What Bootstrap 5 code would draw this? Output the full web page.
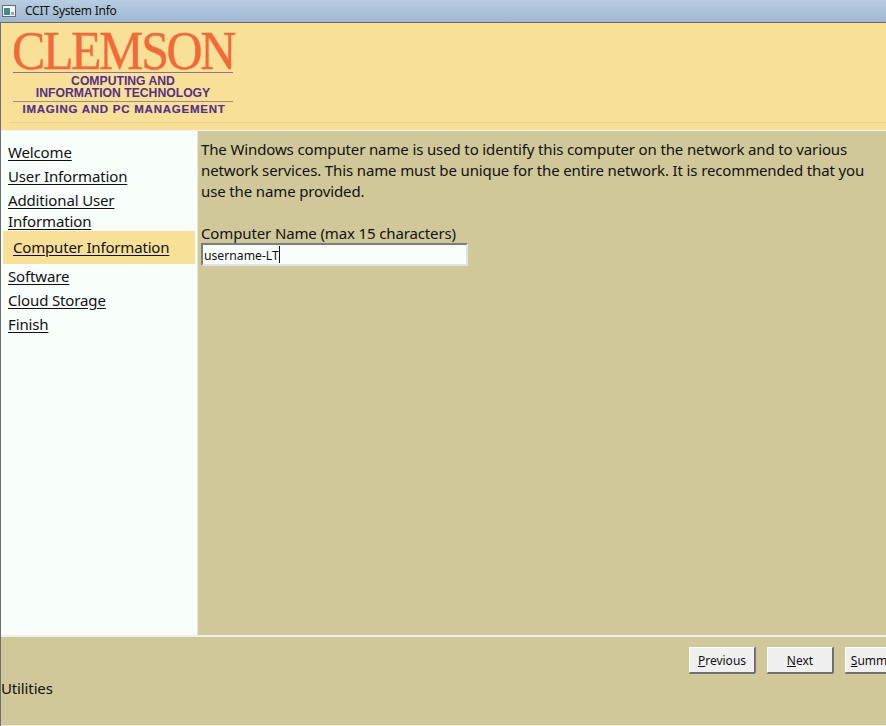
<!DOCTYPE html>
<html lang="en"><head><meta charset="utf-8"><title>CCIT System Info</title>
<link rel="stylesheet" href="https://cdn.jsdelivr.net/npm/bootstrap@5.3.0/dist/css/bootstrap.min.css">
<style>
html,body{height:726px;overflow:hidden}
body{font-family:"Noto Sans","Open Sans",sans-serif;font-size:15px;letter-spacing:-.13px;color:#111;background:#f0f0f0}
.win-title{height:22px;background:linear-gradient(#b9cde2,#9db6d1);font-size:12px;letter-spacing:-.25px;color:#111;padding-left:2px;gap:9px}
.win-body{height:704px;border-left:1px solid #6e6e6e;border-top:1px solid #6b6b6b}
.brand-bar{height:107px;background:#f8e197;padding:10px 0 0 11px;flex:none}
.brand-rule{height:1px;background:#e6d28e;margin:6px 0 0 -2px}
.word{font-family:"Liberation Serif",serif;font-size:54px;line-height:37px;height:37px;margin-bottom:2px;color:#f4683a;letter-spacing:-2.6px;transform:scaleX(.925);transform-origin:left center;white-space:nowrap;-webkit-text-stroke:.4px #f4683a}
.org{width:220px;margin-left:1px;color:#55308a;font-family:"Liberation Sans",sans-serif;font-weight:700;text-align:center;line-height:12px;font-size:12.2px;letter-spacing:0;border-top:1px solid #8c6f9c;border-bottom:1px solid #a08c80;padding:2px 0}
.org2{width:224px;color:#55308a;font-family:"Liberation Sans",sans-serif;font-weight:700;text-align:center;font-size:11.5px;letter-spacing:.75px;line-height:14px;white-space:nowrap;-webkit-text-stroke:.2px #55308a}
.mid{height:504px;margin-top:1px;background:#fff;flex:none}
.side{width:197px;background:#f8fffb;padding-top:11px;flex:none;border-right:1px solid #e6e4d2}
.side-link{display:block;padding:0 7px;line-height:21px;margin-bottom:3px;color:#111;text-decoration:underline;text-underline-offset:2px;letter-spacing:-.14px}
.side-link:hover{color:#111}
.side-active{background:#f8e197;margin:-4px 2px 2px;padding:6px 10px;width:192px;letter-spacing:-.18px}
.pane{background:#d0c898;padding:8px 3px;flex:1}
.pane p{line-height:21px;margin:0 0 21px;width:672px}
.fld-label{line-height:21px;display:block;margin:0}
.fld-wrap{width:267px;height:23px;position:relative;margin-top:-1px}
.fld{width:100%;height:100%;display:block;background:#f8fffb;border:2px solid;border-color:#7d7d7d #e3e3e3 #e3e3e3 #7d7d7d;font:12.2px/17px "Noto Sans",sans-serif;padding:2px 1px 0;color:#111;border-radius:0;outline:0}
.caret-mark{position:absolute;left:78px;top:3px;width:1px;height:17px;background:#111}
.foot{height:89px;margin-top:2px;background:#d0c898;border-bottom:1px solid #e8e8e8;flex:none}
.btn-row{gap:12px;padding:10px 0 0 688px;width:1100px}
.win-btn{width:66px;height:26px;flex:none;background:#f0f0f0;border:1px solid;border-color:#fff #6d6d6d #6d6d6d #fff;font-size:12px;letter-spacing:0;color:#111;padding:2px 0 0;border-radius:0;box-shadow:0 1px 0 #777,1px 0 0 #777}
.util{margin:5px 0 0;line-height:21px}
</style></head>
<body>
<div class="win-title d-flex align-items-center">
<svg width="14" height="12" viewBox="0 0 14 12"><rect x=".5" y=".5" width="13" height="11" fill="#f2f4f6" stroke="#6b6b6b"/><rect x="2" y="3" width="6" height="7" fill="#3f8c8a"/><rect x="9" y="7" width="3" height="3" fill="#9ab"/></svg>
<span>CCIT System Info</span></div>
<div class="win-body d-flex flex-column">
<div class="brand-bar">
<div class="word">CLEMSON</div>
<div class="org">COMPUTING AND<br>INFORMATION TECHNOLOGY</div>
<div class="org2">IMAGING AND PC MANAGEMENT</div>
<div class="brand-rule"></div>
</div>
<div class="mid d-flex">
<nav class="side">
<a class="side-link" href="#">Welcome</a>
<a class="side-link" href="#">User Information</a>
<a class="side-link" href="#">Additional User Information</a>
<a class="side-link side-active" href="#">Computer Information</a>
<a class="side-link" href="#">Software</a>
<a class="side-link" href="#">Cloud Storage</a>
<a class="side-link" href="#">Finish</a>
</nav>
<main class="pane">
<p>The Windows computer name is used to identify this computer on the network and to various network services. This name must be unique for the entire network. It is recommended that you use the name provided.</p>
<label class="fld-label" for="cn">Computer Name (max 15 characters)</label>
<div class="fld-wrap"><input id="cn" class="fld" value="username-LT"><span class="caret-mark"></span></div>
</main>
</div>
<div class="foot overflow-hidden">
<div class="btn-row d-flex">
<button class="btn win-btn"><u>P</u>revious</button>
<button class="btn win-btn"><u>N</u>ext</button>
<button class="btn win-btn"><u>S</u>ummary</button>
</div>
<div class="util">Utilities</div>
</div>
</div>
</body></html>
